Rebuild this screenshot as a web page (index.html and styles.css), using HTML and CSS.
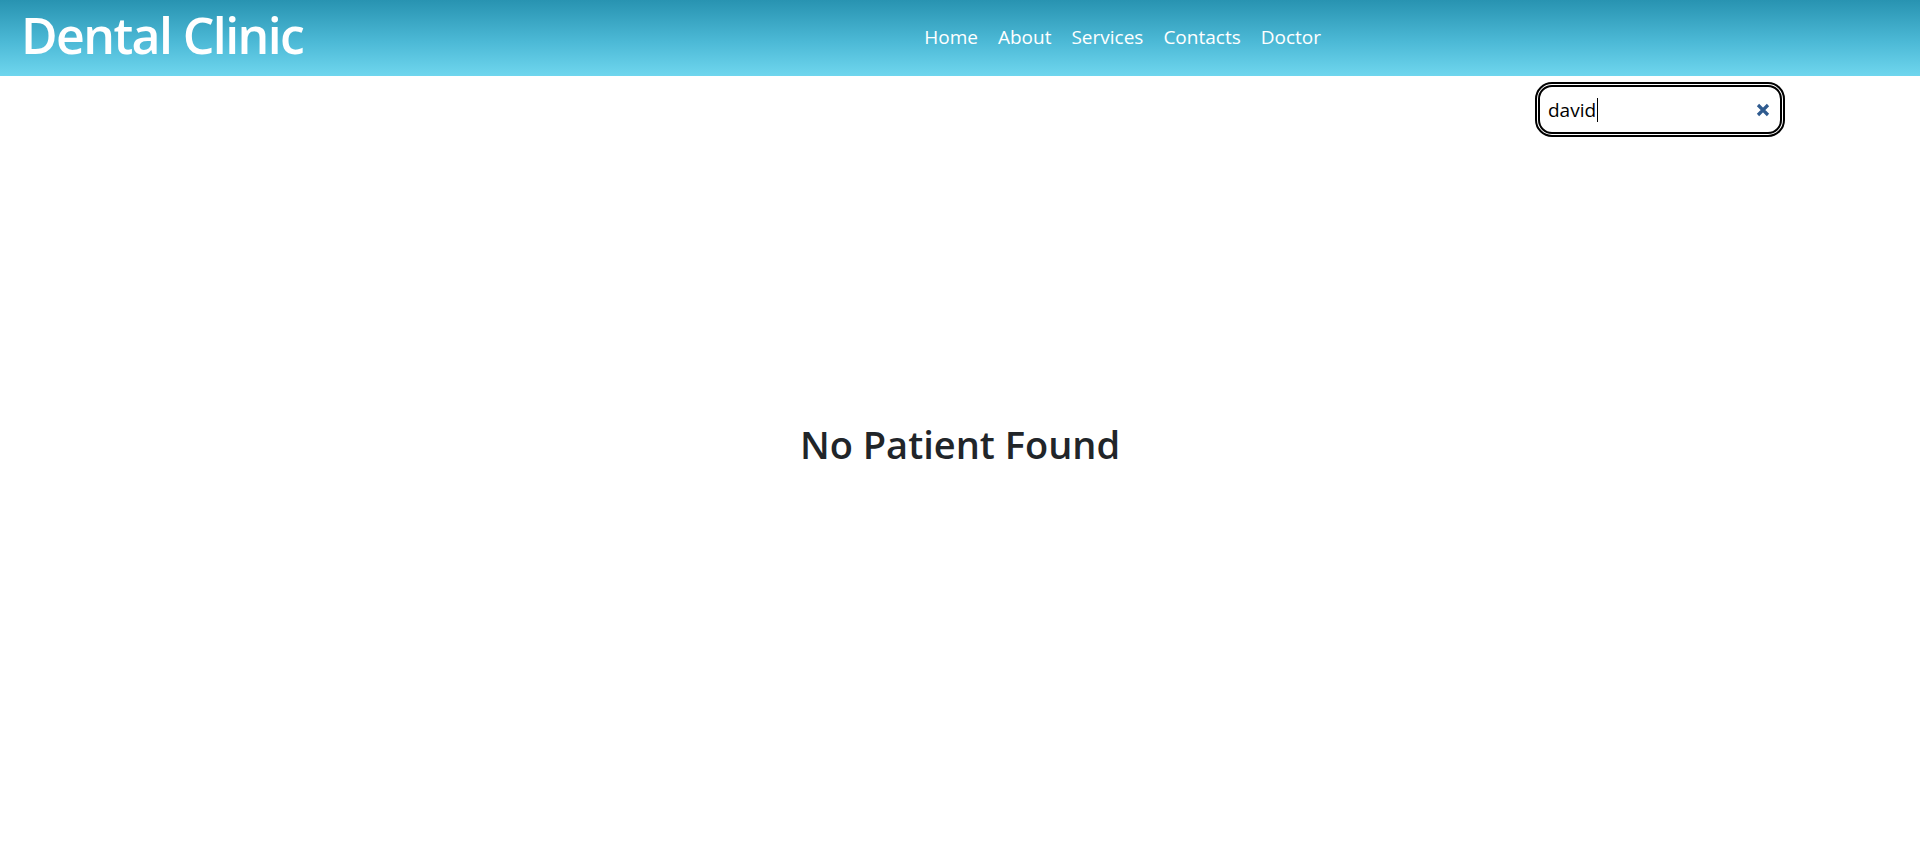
FILE: index.html
```html
<!DOCTYPE html>
<html lang="en">
<head>
<meta charset="utf-8">
<title>Dental Clinic</title>
<link rel="stylesheet" href="styles.css">
</head>
<body>
<header class="topbar">
  <a class="brand" href="#">Dental Clinic</a>
  <nav class="nav">
    <a href="#">Home</a>
    <a href="#">About</a>
    <a href="#">Services</a>
    <a href="#">Contacts</a>
    <a href="#">Doctor</a>
  </nav>
</header>
<div class="search-row">
  <div class="search">
    <span class="search-text">david</span><span class="caret"></span>
    <svg class="clear" viewBox="0 0 14 14" width="14" height="14"><path d="M2 2 L12 12 M12 2 L2 12" stroke="#2f5b8f" stroke-width="3.2" stroke-linecap="butt"/></svg>
  </div>
</div>
<main class="content">
  <h1 class="empty">No Patient Found</h1>
</main>
</body>
</html>
```
FILE: styles.css
```css
* { box-sizing: border-box; }
html, body { margin: 0; padding: 0; }
body {
  font-family: "Open Sans", "Noto Sans", sans-serif;
  color: #212529;
  background: #fff;
  height: 861px;
  display: flex;
  flex-direction: column;
}
.topbar {
  height: 76px;
  background: linear-gradient(to bottom, #2893b1 0%, #4cb9d6 55%, #6fd6ee 100%);
  display: flex;
  align-items: center;
}
.brand {
  color: #fff;
  text-decoration: none;
  font-weight: 600;
  font-size: 50px;
  letter-spacing: -1.6px;
  margin-left: 21px;
  margin-top: -6px;
}
.nav {
  display: flex;
  gap: 20px;
  margin-left: 621px;
  margin-top: -3px;
}
.nav a {
  color: #fff;
  text-decoration: none;
  font-size: 19px;
}
.search-row {
  display: flex;
  justify-content: flex-end;
  padding: 6px 135px 0 0;
}
.search {
  width: 250px;
  height: 55px;
  border: 5px double #000;
  border-radius: 17px;
  display: flex;
  align-items: center;
  padding: 0 10px 0 8px;
}
.search-text {
  font-size: 19px;
  color: #000;
}
.caret {
  width: 1px;
  height: 24px;
  background: #000;
  margin-left: 1px;
}
.clear { margin-left: auto; }
.content {
  flex: 1;
  display: flex;
  justify-content: center;
  padding-top: 285px;
}
.empty {
  margin: 0;
  font-size: 38px;
  font-weight: 600;
  line-height: 1.2;
  align-self: flex-start;
}
```
